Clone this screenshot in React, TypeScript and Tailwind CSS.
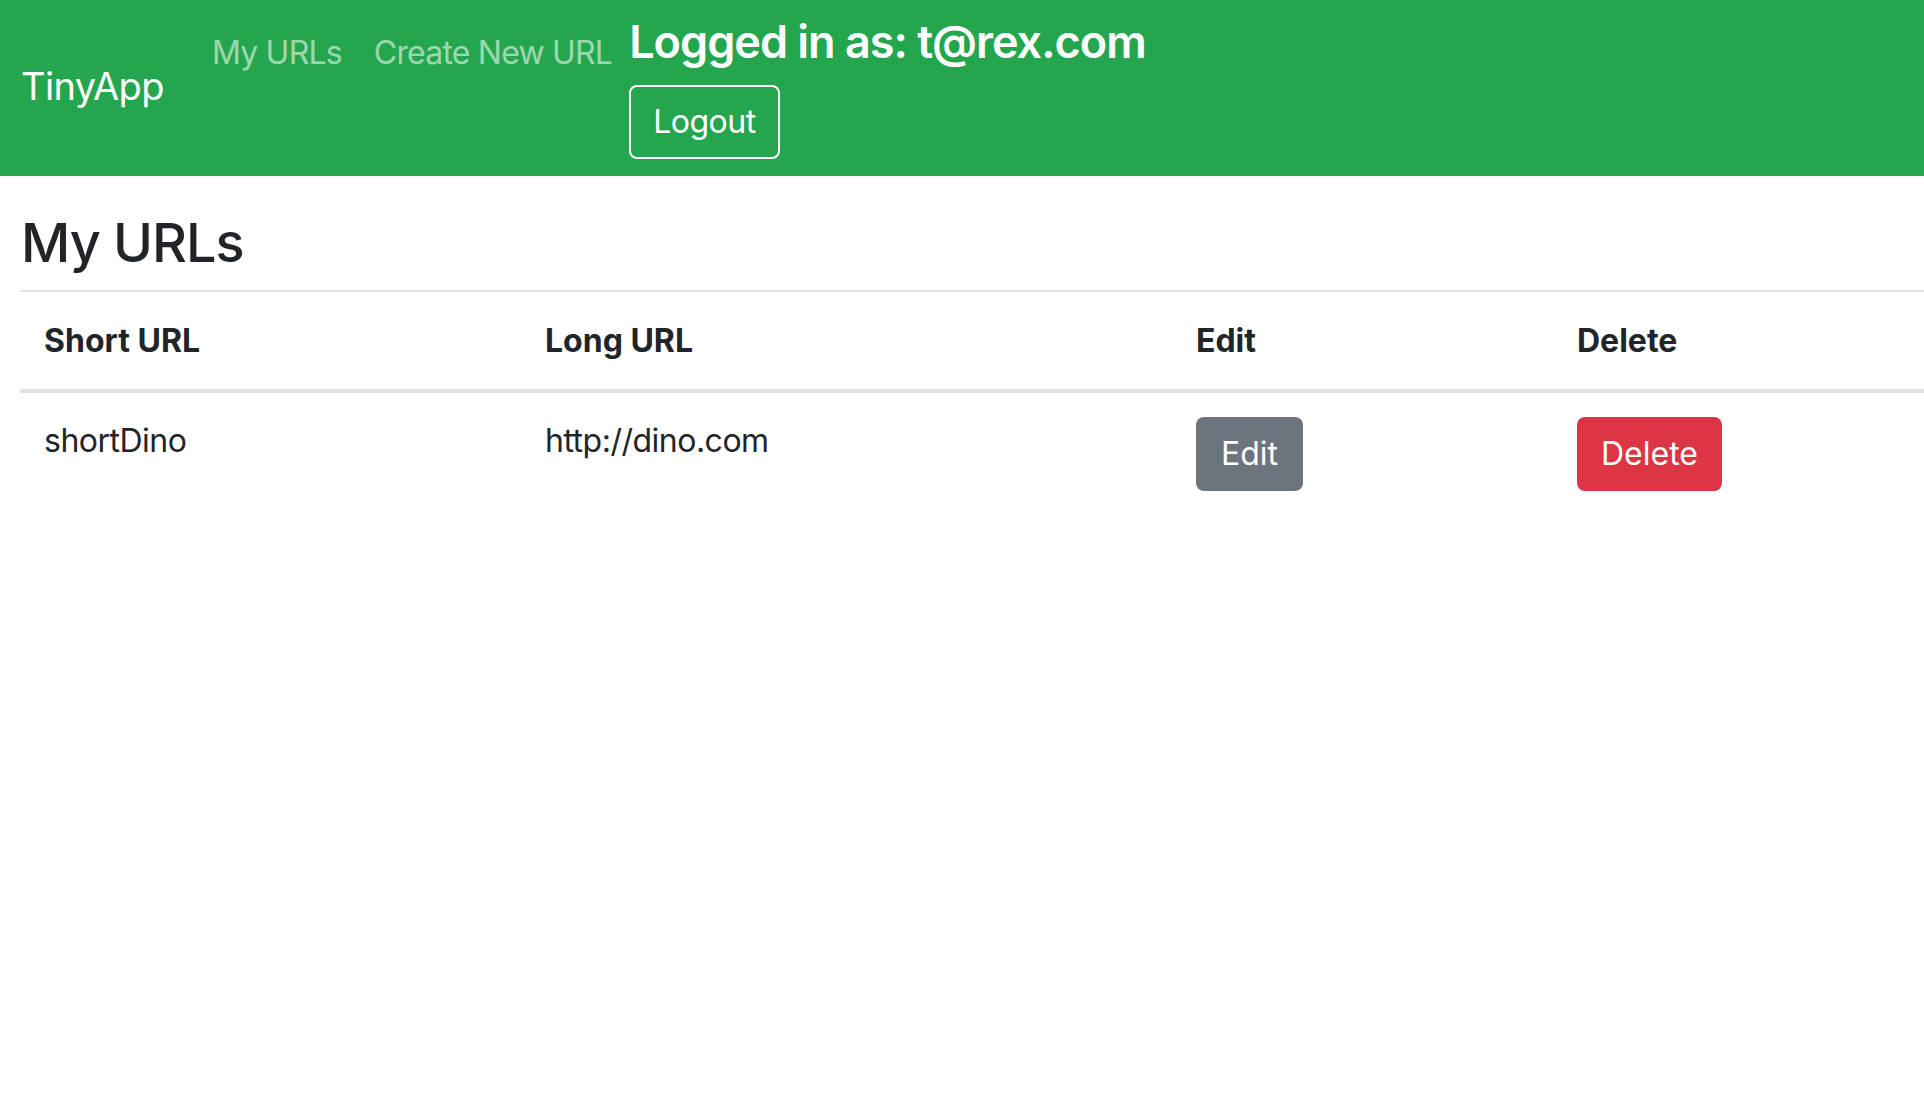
import React from "react";

const urls = [{ short: "shortDino", long: "http://dino.com" }];

const App = () => {
  return (
    <div className="min-h-screen bg-white text-[#212529] font-['Inter','Liberation_Sans',sans-serif] text-[32px] leading-[48px] tracking-[-0.5px]">
      {/* navbar */}
      <nav className="flex h-[176px] bg-[#24a64e] pl-[21px] pt-[13px]">
        <div className="self-center -mt-[18px] mr-[32px] text-[38px] leading-[60px] tracking-[-0.6px] text-white">TinyApp</div>
        <ul className="flex">
          <li>
            <a href="#" className="block px-[16px] py-[16px] tracking-[-0.8px] text-white/55">My URLs</a>
          </li>
          <li>
            <a href="#" className="block px-[16px] py-[16px] tracking-[-0.8px] text-white/55">Create New URL</a>
          </li>
        </ul>
        <div className="ml-[1px] flex flex-col items-start">
          <h4 className="mb-[14px] text-[45px] font-semibold leading-[58px] tracking-[-1px] text-white">
            Logged in as: t@rex.com
          </h4>
          <button className="h-[74px] rounded-[8px] border-2 border-white px-[22px] text-white">Logout</button>
        </div>
      </nav>

      {/* main */}
      <main className="pl-[20px]">
        <h1 className="mt-[36px] mb-[16px] pl-[1px] text-[54px] font-medium leading-[62px] tracking-[-1px]">My URLs</h1>
        <table className="w-full border-collapse text-left">
          <thead>
            <tr className="border-t-2 border-b-4 border-[#dee2e6]">
              <th className="w-[501px] p-[24px] pt-[25px] font-bold tracking-[0px]">Short URL</th>
              <th className="w-[651px] p-[24px] pt-[25px] font-bold tracking-[0px]">Long URL</th>
              <th className="w-[381px] p-[24px] pt-[25px] font-bold tracking-[0px]">Edit</th>
              <th className="p-[24px] pt-[25px] font-bold tracking-[0px]">Delete</th>
            </tr>
          </thead>
          <tbody>
            {urls.map((u) => (
              <tr key={u.short}>
                <td className="p-[24px] align-top">{u.short}</td>
                <td className="p-[24px] align-top">{u.long}</td>
                <td className="p-[24px] align-top">
                  <button className="h-[74px] rounded-[8px] bg-[#6c757d] px-[25px] tracking-[0px] text-white">Edit</button>
                </td>
                <td className="p-[24px] align-top">
                  <button className="h-[74px] rounded-[8px] bg-[#dc3545] px-[24px] tracking-[0px] text-white">Delete</button>
                </td>
              </tr>
            ))}
          </tbody>
        </table>
      </main>
    </div>
  );
};

export default App;
